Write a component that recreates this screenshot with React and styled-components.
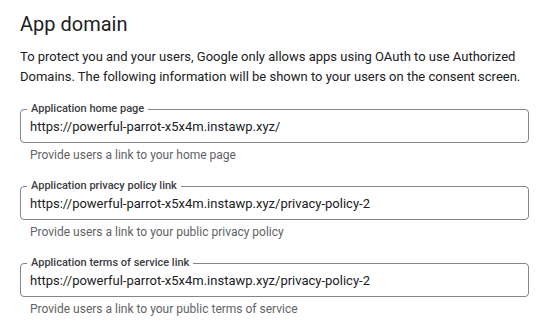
import React from 'react'
import styled, { createGlobalStyle } from 'styled-components'

const GlobalStyle = createGlobalStyle`
  html, body {
    margin: 0;
    padding: 0;
    background: #fff;
  }
  body {
    font-family: Roboto, "Noto Sans", Arial, sans-serif;
    color: #202124;
  }
`

const Section = styled.section`
  padding: 10px 19px 0 20px;
`

const Title = styled.h2`
  margin: 0;
  font-size: 20px;
  line-height: 28px;
  font-weight: 400;
  color: #202124;
`

const Intro = styled.p`
  margin: 9px 0 16px;
  font-size: 13px;
  line-height: 20px;
  color: #202124;
`

const Field = styled.div`
  margin-bottom: 17px;
`

const Outline = styled.fieldset`
  margin: 0;
  padding: 0 6px 4px;
  border: 1px solid #80868b;
  border-radius: 4px;
  min-width: 0;
`

const Label = styled.legend`
  padding: 0 4px;
  font-size: 11px;
  line-height: 12px;
  font-weight: 500;
  color: #3c4043;
`

const Input = styled.input`
  display: block;
  width: 100%;
  box-sizing: border-box;
  height: 23px;
  margin: 0;
  padding: 0 3px;
  border: 0;
  outline: none;
  background: transparent;
  font-family: inherit;
  font-size: 13px;
  color: #202124;
`

const Hint = styled.div`
  margin-top: 4px;
  padding-left: 10px;
  font-size: 12px;
  line-height: 16px;
  color: #5f6368;
`

const fields = [
  {
    label: 'Application home page',
    value: 'https://powerful-parrot-x5x4m.instawp.xyz/',
    hint: 'Provide users a link to your home page',
  },
  {
    label: 'Application privacy policy link',
    value: 'https://powerful-parrot-x5x4m.instawp.xyz/privacy-policy-2',
    hint: 'Provide users a link to your public privacy policy',
  },
  {
    label: 'Application terms of service link',
    value: 'https://powerful-parrot-x5x4m.instawp.xyz/privacy-policy-2',
    hint: 'Provide users a link to your public terms of service',
  },
]

export default function App() {
  return (
    <>
      <GlobalStyle />
      <Section>
        <Title>App domain</Title>
        <Intro>
          To protect you and your users, Google only allows apps using OAuth to use Authorized
          Domains. The following information will be shown to your users on the consent screen.
        </Intro>
        {fields.map(f => (
          <Field key={f.label}>
            <Outline>
              <Label>{f.label}</Label>
              <Input type="text" defaultValue={f.value} />
            </Outline>
            <Hint>{f.hint}</Hint>
          </Field>
        ))}
      </Section>
    </>
  )
}
